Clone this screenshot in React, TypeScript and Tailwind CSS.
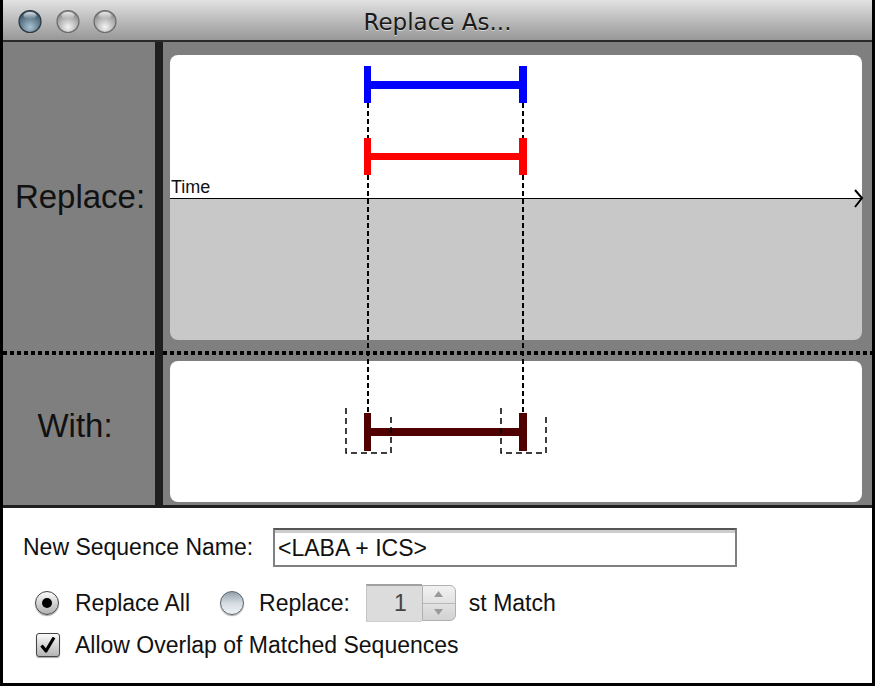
import React from "react";

const sans = "font-['Liberation_Sans',Arial,sans-serif]";

const TrafficLights = () => (
  <svg width="120" height="40" viewBox="0 0 120 40" className="absolute left-0 top-0">
    <defs>
      <radialGradient id="tlBlue" cx="50%" cy="75%" r="65%">
        <stop offset="0%" stopColor="#a9c1d0" />
        <stop offset="100%" stopColor="#3f5a6d" />
      </radialGradient>
      <radialGradient id="tlGray" cx="50%" cy="75%" r="65%">
        <stop offset="0%" stopColor="#f4f4f4" />
        <stop offset="100%" stopColor="#8f8f8f" />
      </radialGradient>
      <linearGradient id="tlShine" x1="0" y1="0" x2="0" y2="1">
        <stop offset="0%" stopColor="#ffffff" stopOpacity="0.85" />
        <stop offset="100%" stopColor="#ffffff" stopOpacity="0" />
      </linearGradient>
    </defs>
    <circle cx="27" cy="21.5" r="11" fill="url(#tlBlue)" stroke="#2b3a45" strokeWidth="1.2" />
    <ellipse cx="27" cy="15.5" rx="6.5" ry="3.5" fill="url(#tlShine)" />
    <circle cx="65" cy="21.5" r="11" fill="url(#tlGray)" stroke="#6d6d6d" strokeWidth="1.2" />
    <ellipse cx="65" cy="15.5" rx="6.5" ry="3.5" fill="url(#tlShine)" />
    <circle cx="102" cy="21.5" r="11" fill="url(#tlGray)" stroke="#6d6d6d" strokeWidth="1.2" />
    <ellipse cx="102" cy="15.5" rx="6.5" ry="3.5" fill="url(#tlShine)" />
  </svg>
);

// bars, guide lines and boxes drawn over the two panels (page coordinates)
const Overlay = () => (
  <svg
    width="869"
    height="463"
    viewBox="3 42 869 463"
    className="absolute left-0 top-0 pointer-events-none"
  >
    <g stroke="#000" strokeWidth="2" strokeDasharray="5 3">
      <line x1="368" y1="103" x2="368" y2="413" />
      <line x1="523" y1="103" x2="523" y2="413" />
    </g>
    <g fill="#0000ff">
      <rect x="364" y="66" width="7" height="37" />
      <rect x="371" y="81" width="148" height="8" />
      <rect x="519" y="66" width="8" height="37" />
    </g>
    <g fill="#ff0000">
      <rect x="364" y="138" width="7" height="37" />
      <rect x="371" y="153" width="148" height="7" />
      <rect x="519" y="138" width="8" height="37" />
    </g>
    <g fill="#500000">
      <rect x="364" y="413" width="7" height="38" />
      <rect x="371" y="428" width="148" height="8" />
      <rect x="519" y="413" width="8" height="38" />
    </g>
    <g stroke="#000" strokeWidth="1.5" strokeDasharray="6 4" fill="none">
      <polyline points="346,408 346,453 391,453 391,413" />
      <polyline points="501,408 501,453 546,453 546,413" />
    </g>
    <polyline points="855,190 862,198 855,207" fill="none" stroke="#000" strokeWidth="2" />
  </svg>
);

const Dots = () => (
  <div className="h-[4px] w-full bg-[repeating-linear-gradient(to_right,#000_0px,#000_4px,transparent_4px,transparent_7px)]" />
);

const Radio = ({ checked }: { checked?: boolean }) =>
  checked ? (
    <div className="w-[24px] h-[24px] rounded-full border border-[#444] bg-linear-to-b from-[#fafafa] to-[#b0b0b0] flex items-center justify-center shadow-[0_1px_1px_rgba(0,0,0,0.35)]">
      <div className="w-[10px] h-[10px] rounded-full bg-black" />
    </div>
  ) : (
    <div className="w-[24px] h-[24px] rounded-full border border-[#56626c] bg-linear-to-b from-[#94a1ab] via-[#d4dbe1] to-[#eef2f5] shadow-[0_1px_1px_rgba(0,0,0,0.35)]" />
  );

const Checkbox = () => (
  <div className="w-[24px] h-[24px] rounded-[3px] border border-[#444] bg-linear-to-b from-[#fafafa] to-[#b4b4b4] flex items-center justify-center shadow-[0_1px_1px_rgba(0,0,0,0.35)]">
    <svg width="18" height="18" viewBox="0 0 18 18">
      <path d="M2.5 9.5 L7 15 L15 1.5" fill="none" stroke="#000" strokeWidth="3.2" strokeLinejoin="round" />
    </svg>
  </div>
);

const Stepper = () => (
  <div className="flex items-stretch h-[38px]">
    <div className="w-[56px] bg-[#dcdcdc] border-t-2 border-t-[#a0a0a0] border-l border-l-[#c4c4c4] border-b border-b-[#cfcfcf] flex items-center justify-end pr-[15px] text-[23px] text-[#444] leading-none">
      1
    </div>
    <div className="w-[34px] my-[1px] rounded-r-[6px] border border-[#b0b0b0] bg-linear-to-b from-[#f2f2f2] to-[#d2d2d2] flex flex-col">
      <div className="flex-1 flex items-center justify-center border-b border-[#b8b8b8]">
        <svg width="9" height="6" viewBox="0 0 9 6"><path d="M4.5 0 L9 6 L0 6 Z" fill="#9a9a9a" /></svg>
      </div>
      <div className="flex-1 flex items-center justify-center">
        <svg width="9" height="6" viewBox="0 0 9 6"><path d="M0 0 L9 0 L4.5 6 Z" fill="#9a9a9a" /></svg>
      </div>
    </div>
  </div>
);

export default function App() {
  return (
    <div className="w-[878px] h-[696px] bg-white">
      <div className={`w-[875px] h-[686px] border-x-[3px] border-b-[3px] border-black flex flex-col ${sans}`}>
        {/* title bar */}
        <div className="relative h-[40px] bg-linear-to-b from-[#e2e2e2] via-[#bcbcbc] to-[#989898] flex items-center justify-center pt-[4px]">
          <TrafficLights />
          <span className="font-['DejaVu_Sans',sans-serif] text-[23px] text-[#1a1a1a] leading-none [text-shadow:0_1px_0_#d8d8d8]">
            Replace As...
          </span>
        </div>
        <div className="h-[2px] bg-[#2a2a2a]" />

        {/* pattern area */}
        <div className="relative h-[463px] flex bg-[#7f7f7f]">
          <div className="w-[152px] flex flex-col">
            <div className="h-[309px] flex items-center justify-center pl-[2px] text-[33px] leading-none text-[#111]">
              Replace:
            </div>
            <Dots />
            <div className="h-[150px] flex items-center justify-center pb-[10px] pr-[8px] text-[33px] leading-none text-[#111]">
              With:
            </div>
          </div>
          <div className="w-[8px] bg-[#1f1f1f]" />
          <div className="flex-1 flex flex-col pt-[13px]">
            <div className="ml-[7px] mr-[10px] h-[285px] rounded-[8px] overflow-hidden flex flex-col">
              <div className="h-[143px] bg-white flex items-end">
                <span className="ml-[1px] mb-[2px] text-[18px] leading-none text-[#111]">Time</span>
              </div>
              <div className="h-[1px] bg-black" />
              <div className="flex-1 bg-[#c8c8c8]" />
            </div>
            <div className="h-[11px]" />
            <Dots />
            <div className="h-[6px]" />
            <div className="ml-[7px] mr-[10px] h-[141px] rounded-[8px] bg-white" />
          </div>
          <Overlay />
        </div>
        <div className="h-[3px] bg-[#1f1f1f]" />

        {/* options */}
        <div className="flex-1 bg-white flex flex-col text-[23px] text-[#111] leading-none">
          <div className="flex items-center mt-[20px] pl-[20px]">
            <span className="w-[250px]">New Sequence Name:</span>
            <div className="w-[464px] h-[39px] border-2 border-[#808080] border-t-[#555] shadow-[inset_0_3px_0_#cdcdcd] flex items-center pl-[3px] pt-[2px]">
              &lt;LABA + ICS&gt;
            </div>
          </div>
          <div className="flex items-center mt-[17px] pl-[32px] h-[38px]">
            <Radio checked />
            <span className="ml-[16px]">Replace All</span>
            <div className="ml-[30px]">
              <Radio />
            </div>
            <span className="ml-[15px]">Replace:</span>
            <div className="ml-[16px]">
              <Stepper />
            </div>
            <span className="ml-[13px]">st Match</span>
          </div>
          <div className="flex items-center mt-[11px] pl-[33px] h-[24px]">
            <Checkbox />
            <span className="ml-[15px]">Allow Overlap of Matched Sequences</span>
          </div>
        </div>
      </div>
    </div>
  );
}
